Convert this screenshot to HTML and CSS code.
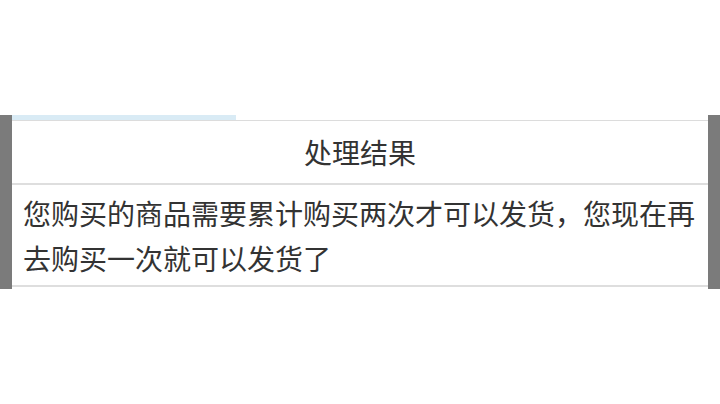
FILE: index.html
```html
<!DOCTYPE html>
<html lang="zh-CN">
<head>
<meta charset="utf-8">
<title>处理结果</title>
<link rel="stylesheet" href="styles.css">
</head>
<body>
<div class="page">
  <div class="frame">
    <div class="edge"></div>
    <div class="panel">
      <div class="progress"><div class="progress-fill"></div></div>
      <div class="panel-title">处理结果</div>
      <div class="panel-body">您购买的商品需要累计购买两次才可以发货，您现在再去购买一次就可以发货了</div>
    </div>
    <div class="edge"></div>
  </div>
</div>
</body>
</html>
```

FILE: styles.css
```css
html, body {
  margin: 0;
  padding: 0;
  background: #ffffff;
}

.page {
  width: 720px;
  height: 404px;
  padding-top: 115px;
  box-sizing: border-box;
  font-family: "Noto Sans CJK SC", "Noto Sans", sans-serif;
  color: #333333;
}

.frame {
  display: flex;
  height: 174px;
}

.edge {
  width: 12px;
  flex: none;
  background: #7b7b7b;
}

.panel {
  flex: 1;
  display: flex;
  flex-direction: column;
  align-self: flex-start;
  background: #ffffff;
}

.progress {
  height: 5px;
  border-bottom: 1px solid #dcdcdc;
}

.progress-fill {
  width: 224px;
  height: 100%;
  background: #d9ebf5;
}

.panel-title {
  height: 62px;
  line-height: 62px;
  text-align: center;
  font-size: 28px;
  border-bottom: 2px solid #dedede;
}

.panel-body {
  padding: 6px 11px 4px 11px;
  font-size: 28px;
  line-height: 45px;
  border-bottom: 2px solid #dedede;
}
```
